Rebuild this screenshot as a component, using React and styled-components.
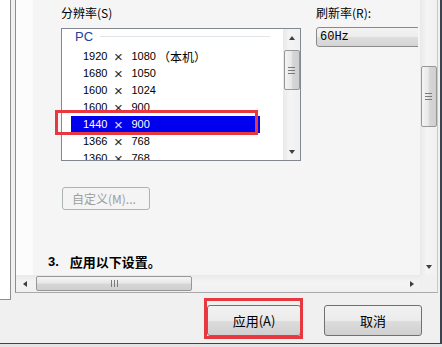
import React from 'react'
import styled, { createGlobalStyle } from 'styled-components'

const GlobalStyle = createGlobalStyle`
  html, body {
    margin: 0;
    padding: 0;
  }
  body {
    width: 442px;
    height: 347px;
    overflow: hidden;
    background: #e4e4e4;
    font-family: "Noto Sans CJK SC", "Liberation Sans", sans-serif;
    color: #000;
  }
`

const Window = styled.div`
  width: 440px;
  height: 343px;
  display: flex;
  flex-direction: column;
  background: #f0f0f0;
  border-right: 2px solid #3a4350;
  border-bottom: 1px solid #3a4350;
`

const Body = styled.div`
  display: flex;
  align-items: flex-start;
  height: 293px;
  flex-shrink: 0;
`

const SidePanel = styled.div`
  position: relative;
  z-index: 1;
  width: 10px;
  height: 299px;
  margin-right: 4px;
  background: #fff;
  border-right: 1px solid #8e8f8f;
  border-bottom: 1px solid #8e8f8f;
`

const ScrollPane = styled.div`
  width: 423px;
  height: 293px;
  box-sizing: border-box;
  display: grid;
  grid-template-columns: 404px 17px;
  grid-template-rows: 275px 17px;
  border-left: 1px solid #8e8f8f;
  border-right: 1px solid #c9c9c9;
  border-bottom: 1px solid #a9a9a9;
`

const Content = styled.div`
  overflow: hidden;
  padding: 5px 0 0 32px;
  background: linear-gradient(to right, #fcfcfc 17px, #f5f5f5 17px);
`

const Settings = styled.div`
  display: flex;
  align-items: flex-start;
  gap: 15px;
  margin-left: 13px;
`

const Group = styled.div`
  position: relative;
  width: ${p => p.$width}px;
  flex-shrink: 0;
  overflow: ${p => (p.$clip ? 'hidden' : 'visible')};
`

const Label = styled.div`
  height: 16px;
  line-height: 16px;
  font-size: 12px;
  margin-bottom: ${p => p.$gap}px;
  white-space: nowrap;
`

const ListBox = styled.div`
  display: flex;
  height: 133px;
  box-sizing: border-box;
  border: 1px solid #828790;
  background: #fff;
  overflow: hidden;
`

const Items = styled.div`
  flex: 1;
  min-width: 0;
`

const GroupHeader = styled.div`
  display: flex;
  align-items: flex-start;
  height: 19px;
  padding: 0 13px 0 13px;
`

const GroupName = styled.span`
  font-family: "Liberation Sans", sans-serif;
  font-size: 13px;
  line-height: 16px;
  color: #23419c;
`

const GroupLine = styled.div`
  flex: 1;
  height: 1px;
  margin: 7px 0 0 7px;
  background: #e0e5ea;
`

const Row = styled.div`
  width: 189px;
  height: 17px;
  margin-left: 9px;
  padding-left: 12px;
  box-sizing: border-box;
  display: flex;
  align-items: center;
  font-family: "Liberation Sans", sans-serif;
  font-size: 11px;
  line-height: 17px;
  white-space: nowrap;
  background: ${p => (p.$selected ? '#0000ee' : 'transparent')};
  color: ${p => (p.$selected ? '#fff' : '#000')};
`

const Cross = styled.span`
  width: 12px;
  margin: 0 7px 0 5px;
  text-align: center;
  font-size: 15px;
  line-height: 17px;
  opacity: 0.85;
`

const Note = styled.span`
  margin-left: 2px;
  font-family: "Noto Sans CJK SC", sans-serif;
  font-size: 12px;
`

const VScroll = styled.div`
  display: flex;
  flex-direction: column;
  width: 17px;
  flex-shrink: 0;
  background: linear-gradient(to right, #e9e9e9, #f4f4f4 40%, #f0f0f0);
`

const ArrowCell = styled.div`
  height: 17px;
  flex-shrink: 0;
  display: flex;
  align-items: center;
  justify-content: center;
`

const HArrowCell = styled(ArrowCell)`
  width: 17px;
  height: auto;
`

const Arrow = styled.div`
  width: 0;
  height: 0;
  border-style: solid;
  border-color: transparent;
  ${p =>
    p.$dir === 'up' &&
    'border-width: 0 3.5px 4px 3.5px; border-bottom-color: #3f3f3f;'}
  ${p =>
    p.$dir === 'down' &&
    'border-width: 4px 3.5px 0 3.5px; border-top-color: #3f3f3f;'}
  ${p =>
    p.$dir === 'left' &&
    'border-width: 3.5px 4px 3.5px 0; border-right-color: #3f3f3f;'}
  ${p =>
    p.$dir === 'right' &&
    'border-width: 3.5px 0 3.5px 4px; border-left-color: #3f3f3f;'}
`

const Track = styled.div`
  flex: 1;
  display: flex;
  flex-direction: ${p => (p.$horizontal ? 'row' : 'column')};
  align-items: ${p => (p.$horizontal ? 'stretch' : 'center')};
`

const Thumb = styled.div`
  box-sizing: border-box;
  display: flex;
  align-items: center;
  justify-content: center;
  border: 1px solid #979797;
  border-radius: 2px;
  ${p =>
    p.$horizontal
      ? `
    width: ${p.$size}px;
    margin: 1px 0 1px ${p.$offset}px;
    background: linear-gradient(#f4f4f4, #e8e8e8 45%, #d6d6d6 55%, #cfcfcf);
  `
      : `
    height: ${p.$size}px;
    width: 16px;
    margin-top: ${p.$offset}px;
    background: linear-gradient(to right, #f4f4f4, #e8e8e8 45%, #d6d6d6 55%, #cfcfcf);
  `}
`

const Grip = styled.div`
  width: 7px;
  height: 7px;
  background: ${p =>
    p.$horizontal
      ? 'repeating-linear-gradient(to right, #7a7a7a 0 1px, transparent 1px 3px)'
      : 'repeating-linear-gradient(#7a7a7a 0 1px, transparent 1px 3px)'};
`

const PageVScroll = styled(VScroll)`
  width: auto;
`

const HScroll = styled.div`
  display: flex;
  background: linear-gradient(#e9e9e9, #f4f4f4 40%, #f0f0f0);
`

const Corner = styled.div`
  background: #f0f0f0;
`

const Select = styled.div`
  width: 130px;
  height: 20px;
  box-sizing: border-box;
  border: 1px solid #8a8a8a;
  border-radius: 3px;
  padding-left: 3px;
  font-family: "Liberation Mono", monospace;
  font-size: 12px;
  line-height: 18px;
  background: linear-gradient(#f4f4f4, #ececec 50%, #dedede 51%, #d4d4d4);
`

const CustomButton = styled.div`
  width: 88px;
  height: 23px;
  box-sizing: border-box;
  margin: 26px 0 0 14px;
  padding-left: 9px;
  border: 1px solid #adb2b5;
  border-radius: 3px;
  background: #f4f4f4;
  color: #9d9d9d;
  font-size: 12px;
  line-height: 21px;
  white-space: nowrap;
`

const StepTitle = styled.div`
  margin-top: 44px;
  display: flex;
  align-items: center;
  height: 16px;
  font-size: 13px;
  font-weight: bold;
  line-height: 16px;
  white-space: nowrap;
`

const StepNumber = styled.span`
  font-family: "Liberation Sans", sans-serif;
  margin-right: 11px;
`

const Footer = styled.div`
  display: flex;
  justify-content: flex-end;
  align-items: flex-start;
  gap: 23px;
  height: 50px;
  padding: 12px 18px 0 0;
  box-sizing: border-box;
`

const ButtonWrap = styled.div`
  position: relative;
`

const Button = styled.div`
  width: ${p => p.$width}px;
  height: 31px;
  box-sizing: border-box;
  display: flex;
  align-items: center;
  justify-content: center;
  border: 1px solid #707070;
  border-radius: 3px;
  background: linear-gradient(#f2f2f2, #ebebeb 50%, #dddddd 51%, #cfcfcf);
  font-size: 13px;
`

const Highlight = styled.div`
  position: absolute;
  top: ${p => p.$top}px;
  left: ${p => p.$left}px;
  width: ${p => p.$width}px;
  height: ${p => p.$height}px;
  box-sizing: border-box;
  border: 3px solid #e8383f;
  pointer-events: none;
`

const resolutions = [
  { w: 1920, h: 1080, note: '（本机）' },
  { w: 1680, h: 1050 },
  { w: 1600, h: 1024 },
  { w: 1600, h: 900 },
  { w: 1440, h: 900, selected: true },
  { w: 1366, h: 768 },
  { w: 1360, h: 768 }
]

export default function App() {
  return (
    <>
      <GlobalStyle />
      <Window>
        <Body>
          <SidePanel />
          <ScrollPane>
            <Content>
              <Settings>
                <Group $width={240}>
                  <Label $gap={7}>分辨率(S)</Label>
                  <ListBox>
                    <Items>
                      <GroupHeader>
                        <GroupName>PC</GroupName>
                        <GroupLine />
                      </GroupHeader>
                      {resolutions.map(r => (
                        <Row key={`${r.w}x${r.h}`} $selected={r.selected}>
                          {r.w}
                          <Cross>×</Cross>
                          {r.h}
                          {r.note && <Note>{r.note}</Note>}
                        </Row>
                      ))}
                    </Items>
                    <VScroll>
                      <ArrowCell>
                        <Arrow $dir="up" />
                      </ArrowCell>
                      <Track>
                        <Thumb $size={40} $offset={4}>
                          <Grip />
                        </Thumb>
                      </Track>
                      <ArrowCell>
                        <Arrow $dir="down" />
                      </ArrowCell>
                    </VScroll>
                  </ListBox>
                  <Highlight $top={105} $left={-6} $width={203} $height={25} />
                </Group>
                <Group $width={102} $clip>
                  <Label $gap={6}>刷新率(R):</Label>
                  <Select>60Hz</Select>
                </Group>
              </Settings>
              <CustomButton>自定义(M)...</CustomButton>
              <StepTitle>
                <StepNumber>3.</StepNumber>
                应用以下设置。
              </StepTitle>
            </Content>
            <PageVScroll>
              <Track>
                <Thumb $size={61} $offset={66}>
                  <Grip />
                </Thumb>
              </Track>
              <ArrowCell>
                <Arrow $dir="down" />
              </ArrowCell>
            </PageVScroll>
            <HScroll>
              <HArrowCell>
                <Arrow $dir="left" />
              </HArrowCell>
              <Track $horizontal>
                <Thumb $horizontal $size={156} $offset={3}>
                  <Grip $horizontal />
                </Thumb>
              </Track>
              <HArrowCell>
                <Arrow $dir="right" />
              </HArrowCell>
            </HScroll>
            <Corner />
          </ScrollPane>
        </Body>
        <Footer>
          <ButtonWrap>
            <Button $width={94}>应用(A)</Button>
            <Highlight $top={-7} $left={-3} $width={99} $height={41} />
          </ButtonWrap>
          <Button $width={98}>取消</Button>
        </Footer>
      </Window>
    </>
  )
}
